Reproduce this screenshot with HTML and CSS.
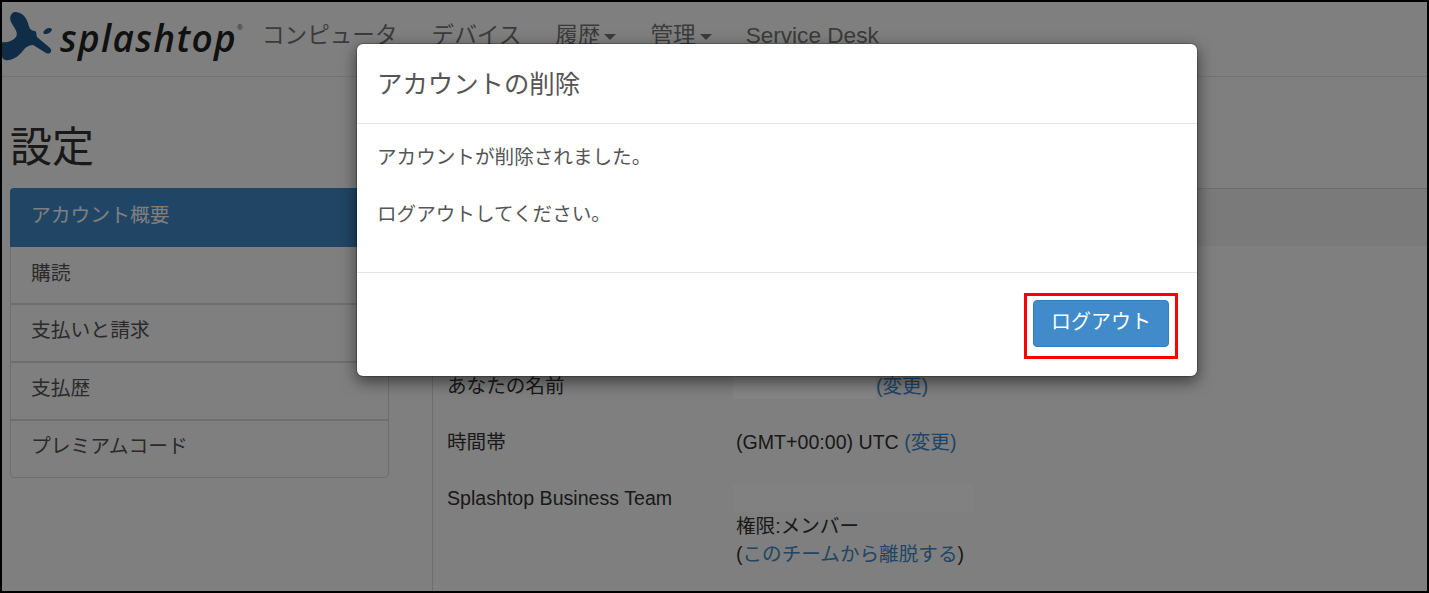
FILE: index.html
```html
<!DOCTYPE html>
<html lang="ja">
<head>
<meta charset="utf-8">
<title>アカウントの削除</title>
<link rel="stylesheet" href="styles.css">
</head>
<body>
<div class="frame">
  <header class="topbar">
    <div class="logo">
      <svg class="logo-mark" viewBox="2 12 52 50" width="52" height="50" aria-hidden="true">
        <path d="M15 12C22 12 26 17 28 23C29 28 31 31 35 31C37 32 36 35 37 37C41 41 46 44 50 48C53 51 50 55 46 53C41 50 37 47 33 45C28 45 25 48 22 52C17 58 10 61 5 60C3 59 2 58 2 56V42C7 43 13 41 16 37C18 34 16 30 14 27C11 23 9 18 11 15C12 13 13 12 15 12Z" fill="#1f5a8e"/>
        <path d="M44 31C46 28 50 27 52 29C52 32 48 34 45 34C43 34 43 32 44 31Z" fill="#1f5a8e"/>
      </svg>
      <span class="logo-text">splashtop</span><span class="logo-reg">®</span>
    </div>
    <nav class="nav">
      <a>コンピュータ</a>
      <a>デバイス</a>
      <a>履歴<i class="caret"></i></a>
      <a>管理<i class="caret"></i></a>
      <a>Service Desk</a>
    </nav>
  </header>

  <main class="page">
    <h1 class="title">設定</h1>
    <div class="columns">
      <ul class="menu">
        <li class="menu-item active">アカウント概要</li>
        <li class="menu-item">購読</li>
        <li class="menu-item">支払いと請求</li>
        <li class="menu-item">支払歴</li>
        <li class="menu-item">プレミアムコード</li>
      </ul>
      <section class="content">
        <div class="panel-head"></div>
        <dl class="info">
          <div class="row">
            <dt>あなたの名前</dt>
            <dd><span class="redact redact-name"></span><a class="link">(変更)</a></dd>
          </div>
          <div class="row">
            <dt>時間帯</dt>
            <dd>(GMT+00:00) UTC <a class="link">(変更)</a></dd>
          </div>
          <div class="row">
            <dt>Splashtop Business Team</dt>
            <dd>
              <span class="redact redact-team"></span>
              <span class="line">権限:メンバー</span>
              <span class="line">(<a class="link">このチームから離脱する</a>)</span>
            </dd>
          </div>
        </dl>
      </section>
    </div>
  </main>

  <div class="backdrop"></div>

  <div class="modal" role="dialog">
    <div class="modal-head">アカウントの削除</div>
    <div class="modal-body">
      <p>アカウントが削除されました。</p>
      <p>ログアウトしてください。</p>
    </div>
    <div class="modal-foot">
      <span class="callout"><button class="btn">ログアウト</button></span>
    </div>
  </div>
</div>
</body>
</html>
```

FILE: styles.css
```css
* { box-sizing: border-box; }
html, body { margin: 0; padding: 0; height: 100%; }
body {
  font-family: "Liberation Sans", "Noto Sans CJK JP", sans-serif;
  font-size: 19.6px;
  line-height: 28px;
  color: #333;
  background: #fff;
  overflow: hidden;
}
.frame {
  position: relative;
  width: 1429px;
  height: 593px;
  border: 2px solid #000;
  overflow: hidden;
}
.topbar {
  display: flex;
  align-items: flex-start;
  height: 75px;
  border-bottom: 1px solid #e7e7e7;
}
.logo {
  display: flex;
  align-items: flex-start;
  width: 260px;
  flex: none;
}
.logo-mark { margin-top: 10px; flex: none; }
.logo-text {
  margin: 13px 0 0 6px;
  font-family: "Open Sans", "Liberation Sans", sans-serif;
  font-weight: 600;
  font-style: italic;
  font-size: 37px;
  line-height: 46px;
  letter-spacing: 1.3px;
  color: #222;
}
.logo-reg { font-size: 8px; line-height: 10px; margin-top: 21px; color: #444; }
.nav {
  display: flex;
  gap: 34px;
  padding-top: 19px;
  font-size: 22.6px;
  line-height: 30px;
  color: #777;
}
.caret {
  display: inline-block;
  margin-left: 4px;
  vertical-align: middle;
  border-top: 6px solid #777;
  border-left: 6.5px solid transparent;
  border-right: 6.5px solid transparent;
}
.page { padding: 0 0 0 8px; }
.title {
  margin: 48px 0 17px;
  font-size: 42px;
  line-height: 46px;
  font-weight: 400;
}
.columns { display: flex; }
.menu {
  width: 379px;
  flex: none;
  margin: 0;
  padding: 0;
  list-style: none;
  border: 1px solid #ddd;
  border-radius: 4px;
  align-self: flex-start;
}
.menu-item {
  height: 58px;
  padding: 11px 20px;
  font-size: 19.8px;
  line-height: 28px;
  color: #555;
  border-top: 2px solid #ddd;
}
.menu-item:first-child { border-top: 0; }
.menu-item.active {
  margin: -1px -1px 0;
  height: 59px;
  padding: 13px 21px;
  background: #428bca;
  color: #fff;
  border-radius: 4px 4px 0 0;
}
.menu-item.active + .menu-item {
  height: 56px;
  padding-top: 12px;
  border-top: 0;
}
.content {
  flex: 1;
  margin-left: 43px;
  padding-left: 14px;
  border-left: 1px solid #ddd;
}
.panel-head {
  height: 58px;
  margin-left: -14px;
  background: #f5f5f5;
  border-top: 1px solid #ddd;
}
.info { margin: 126px 0 0; }
.row { display: flex; margin-bottom: 28px; }
.row dt { width: 289px; flex: none; font-weight: 400; }
.row dd { margin: 0; }
.link { color: #428bca; }
.line { display: block; }
.redact {
  display: inline-block;
  position: relative;
  z-index: 1;
  background: #848484;
}
.redact-name { width: 143px; height: 22px; margin-left: -3px; vertical-align: -6px; }
.redact-team { display: block; width: 240px; height: 28px; margin-left: -3px; background: #818181; }
.backdrop {
  position: absolute;
  inset: 0;
  background: rgba(0, 0, 0, .5);
}
.modal {
  position: absolute;
  z-index: 2;
  left: 354px;
  top: 41px;
  width: 842px;
  height: 334px;
  background: #fff;
  background-clip: padding-box;
  border: 1px solid rgba(0, 0, 0, .2);
  border-radius: 7px;
  box-shadow: 0 5px 15px rgba(0, 0, 0, .5);
  display: flex;
  flex-direction: column;
}
.modal-head {
  height: 80px;
  padding: 23px 20px 0;
  font-size: 25.4px;
  line-height: 34px;
  color: #555;
  border-bottom: 1px solid #e5e5e5;
}
.modal-body {
  height: 148px;
  padding: 19px 20px 0;
  font-size: 19.6px;
  line-height: 28px;
  color: #555;
}
.modal-body p { margin: 0 0 29px; }
.modal-foot {
  flex: 1;
  border-top: 1px solid #e5e5e5;
  display: flex;
  justify-content: flex-end;
  align-items: flex-start;
  padding: 20px 19px 0 0;
}
.callout {
  display: block;
  border: 3px solid #f00;
  padding: 4px 6px;
  height: 66px;
}
.btn {
  display: block;
  width: 136px;
  height: 47px;
  margin: 0;
  padding: 0 0 3px;
  font: inherit;
  font-size: 20px;
  color: #fff;
  background: #428bca;
  border: 1px solid #357ebd;
  border-radius: 4px;
}
```
